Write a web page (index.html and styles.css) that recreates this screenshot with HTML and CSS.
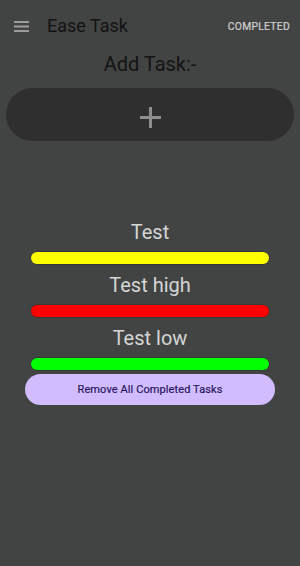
FILE: index.html
```html
<!DOCTYPE html>
<html>
<head>
<meta charset="utf-8">
<link rel="stylesheet" href="styles.css">
</head>
<body>
<div class="app">
  <header class="topbar">
    <svg class="menu" width="15" height="11" viewBox="0 0 15 11"><rect x="0" y="0" width="15" height="2" fill="#9b9b9b"/><rect x="0" y="4.5" width="15" height="2" fill="#9b9b9b"/><rect x="0" y="9" width="15" height="2" fill="#9b9b9b"/></svg>
    <span class="title">Ease Task</span>
    <span class="action">COMPLETED</span>
  </header>
  <h1 class="add-label">Add Task:-</h1>
  <div class="add-btn">
    <svg width="21" height="21" viewBox="0 0 21 21"><rect x="9" y="0" width="3" height="21" fill="#8e8e8e"/><rect x="0" y="9" width="21" height="3" fill="#8e8e8e"/></svg>
  </div>
  <ul class="tasks">
    <li class="task"><span class="name">Test</span><span class="bar yellow"></span></li>
    <li class="task"><span class="name">Test high</span><span class="bar red"></span></li>
    <li class="task"><span class="name">Test low</span><span class="bar green"></span></li>
  </ul>
  <div class="remove-btn">Remove All Completed Tasks</div>
</div>
</body>
</html>
```
FILE: styles.css
```css
html, body {
  margin: 0;
  padding: 0;
  background: #424443;
  font-family: Roboto, "Noto Sans", sans-serif;
}
.app {
  width: 300px;
  height: 566px;
  display: flex;
  flex-direction: column;
}
.topbar {
  height: 52px;
  display: flex;
  align-items: center;
  padding: 0 10px 0 14px;
}
.menu { display: block; }
.title {
  margin-left: 18px;
  font-size: 18px;
  line-height: 22px;
  color: #121212;
  flex: 1;
}
.action {
  font-size: 10.3px;
  font-weight: 400;
  color: #d2d2d2;
  letter-spacing: 0.3px;
  -webkit-text-stroke: 0.2px #d2d2d2;
}
.add-label {
  margin: 0;
  font-size: 20px;
  line-height: 24px;
  font-weight: 400;
  color: #141414;
  text-align: center;
}
.add-btn {
  margin: 12px 6px 0;
  height: 53px;
  box-sizing: border-box;
  padding-top: 5px;
  border-radius: 27px;
  background: #2f2f2f;
  display: flex;
  align-items: center;
  justify-content: center;
}
.tasks {
  list-style: none;
  margin: 79px 0 0;
  padding: 0;
  display: flex;
  flex-direction: column;
  gap: 9px;
}
.task {
  display: flex;
  flex-direction: column;
  align-items: center;
  gap: 8px;
}
.name {
  font-size: 20px;
  line-height: 24px;
  color: #d6d6d6;
}
.bar {
  width: 238px;
  height: 12px;
  border-radius: 6px;
  box-shadow: 0 0 0 0.5px rgba(0,0,0,0.35);
}
.yellow { background: #ffff00; }
.red { background: #ff0000; }
.green { background: #00ff00; }
.remove-btn {
  margin: 4px 25px 0;
  height: 31px;
  border-radius: 16px;
  background: #d0bcff;
  color: #2a1660;
  font-size: 11px;
  font-weight: 400;
  letter-spacing: 0.1px;
  -webkit-text-stroke: 0.2px #2a1660;
  display: flex;
  align-items: center;
  justify-content: center;
}
```
